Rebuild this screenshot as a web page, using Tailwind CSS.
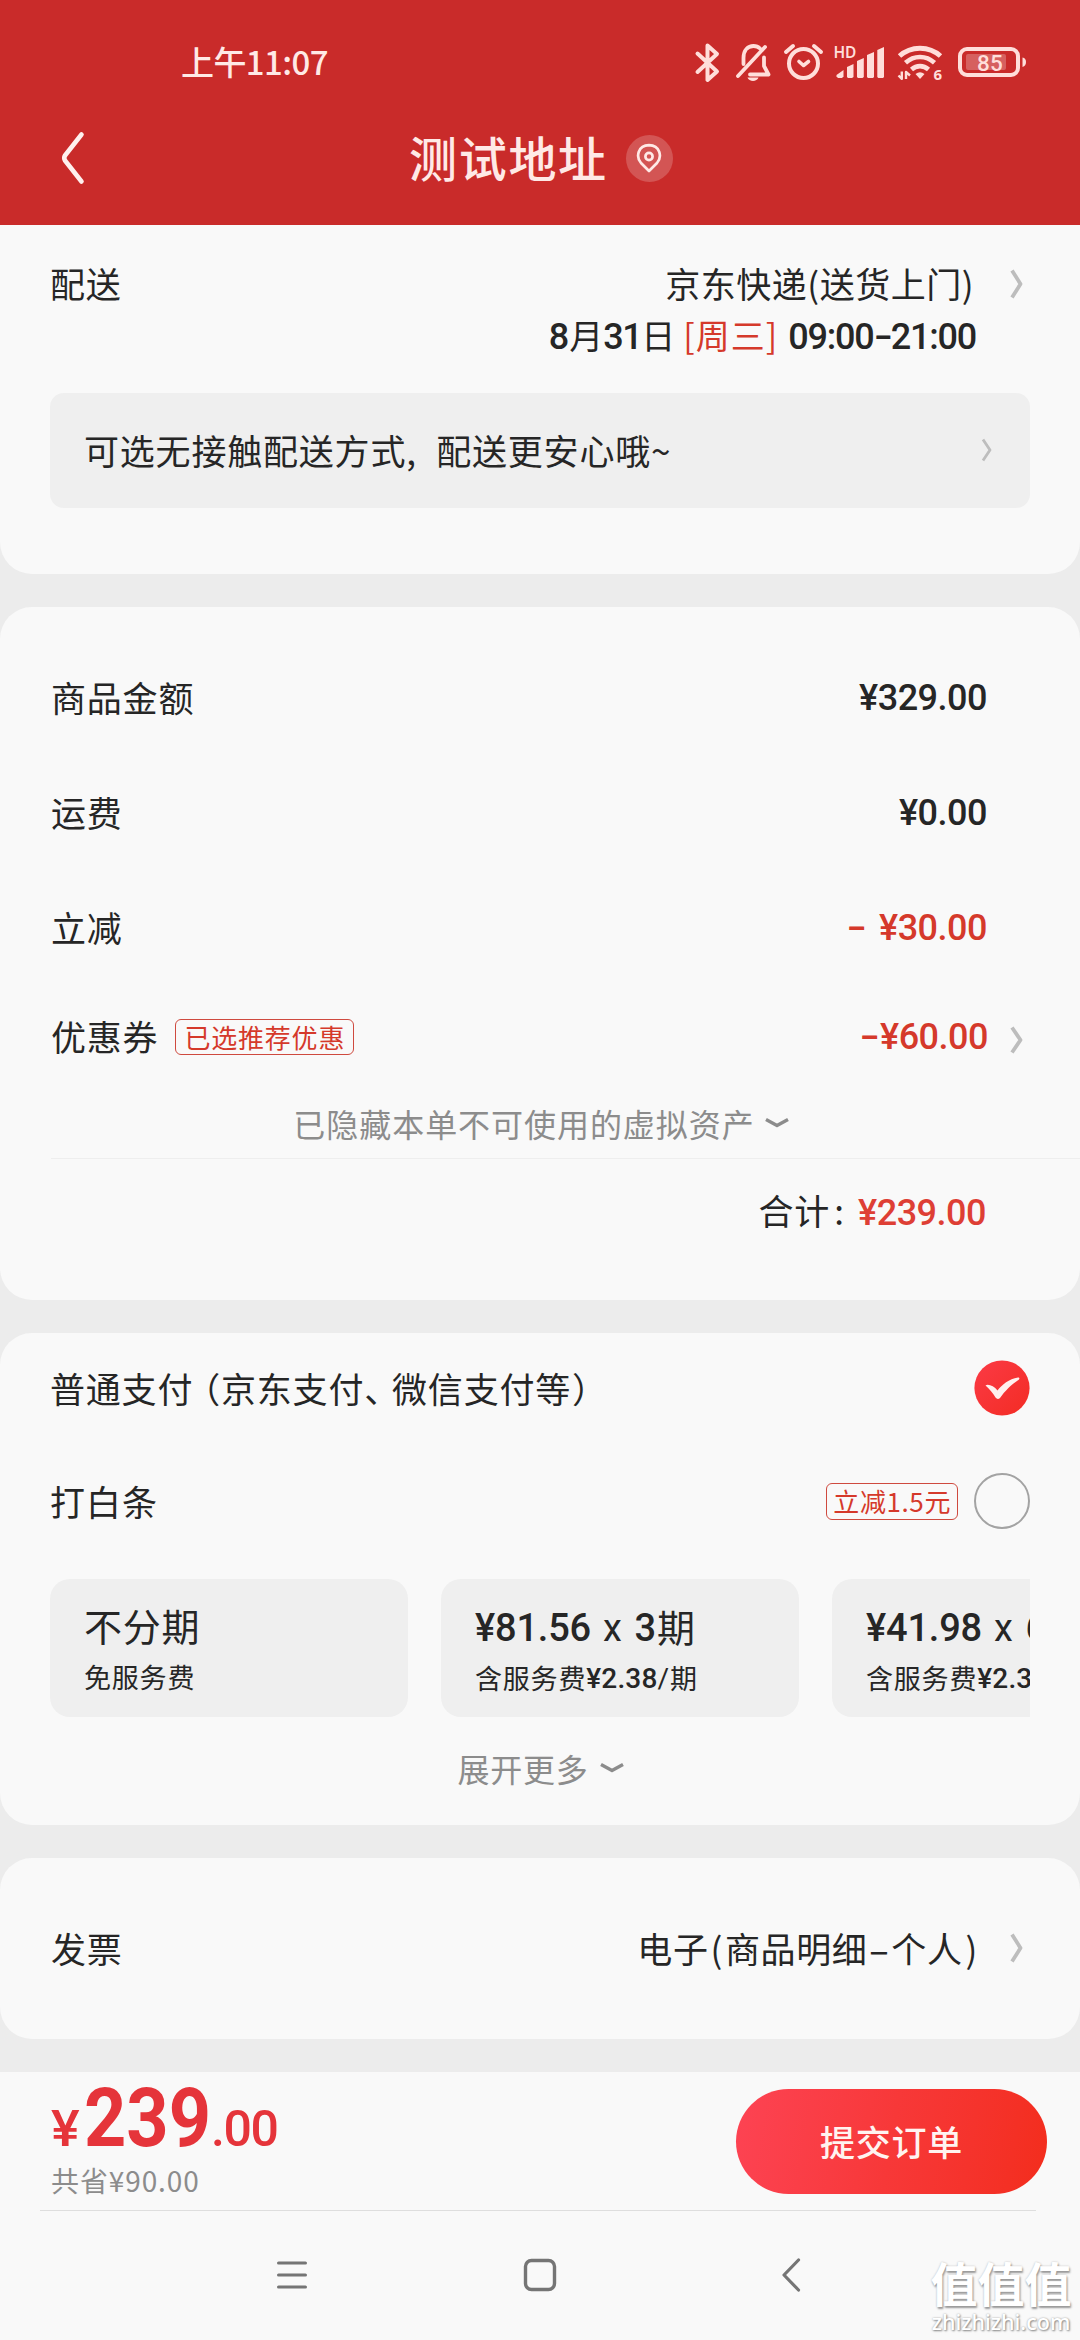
<!DOCTYPE html>
<html lang="zh-CN">
<head>
<meta charset="utf-8">
<title>确认订单</title>
<script src="https://cdn.jsdelivr.net/npm/@tailwindcss/browser@4"></script>
</head>
<body class="w-[1080px] h-[2340px] overflow-hidden bg-[#ececec] font-['Noto_Sans_CJK_SC',sans-serif] text-[35px] leading-[36px] tracking-[0.8px] text-[#262626]">
<div class="relative flex h-[2340px] w-[1080px] flex-col">

  <!-- header -->
  <header class="flex h-[225px] flex-none flex-col bg-[#c92b2a] text-[#ffe9e6]">
    <div class="flex h-[120px] items-start justify-between pl-[181px] pr-[53px] pt-[40px]">
      <div class="h-[44px] text-[33px] font-medium leading-[42px] tracking-[-0.6px]">上午11:07</div>
      <svg class="h-[44px] w-[336px]" viewBox="691 40 336 44" fill="none" stroke="#ffdeda" stroke-width="4" stroke-linecap="round" stroke-linejoin="round">
        <!-- bluetooth -->
        <path d="M697.500 53.500 L717 71.500 L707.500 80 V45.500 L717 54 L697.500 72" stroke-width="4"/>
        <!-- muted bell -->
        <path d="M765 47 L738 76" stroke-width="3.8"/>
        <path d="M743.500 64 V58 C743.500 50 748 46 753.500 46 C756 46 758.500 47 760 48.500 M764 57.500 V66 L768.500 74.500 H750" stroke-width="3.8"/>
        <path d="M747.500 77.500 H758.500 C757 82 749 82 747.500 77.500 Z" fill="#ffdeda" stroke="none"/>
        <!-- alarm -->
        <circle cx="803.500" cy="63.500" r="14.500"/>
        <path d="M799 61.500 L803.500 65.500 L808.500 61.500" stroke-width="3.6"/>
        <path d="M786 52 L793 46 M821 52 L814 46" />
        <!-- signal -->
        <text x="833.500" y="58" font-family="Noto Sans" font-size="15.500" font-weight="600" letter-spacing="-0.300" fill="#ffdeda" stroke="none">HD</text>
        <g fill="#ffdeda" stroke="none">
          <path d="M836.500 75 L843.500 70 V76.500 L842 78 H838 L836.500 76.500Z"/>
          <path d="M847 67 L853.500 64 V77 L852 78 H848 L847 77Z"/>
          <path d="M857 61 L863.800 58 V77 L862.500 78 H858 L857 77Z"/>
          <path d="M867 55 L874 52 V77 L873 78 H868 L867 77Z"/>
          <path d="M877.300 50 L884 47 V77 L883 78 H878.300 L877.300 77Z"/>
        </g>
        <!-- wifi -->
        <path d="M899.500 56 C911 45.500 929 45.500 940.500 56" stroke-width="5" stroke-linecap="butt"/>
        <path d="M905.500 62.800 C914 55 926 55 934.500 62.800" stroke-width="4.600" stroke-linecap="butt"/>
        <path d="M911.500 69.500 C916.500 65 923.500 65 928.500 69.500" stroke-width="4.600" stroke-linecap="butt"/>
        <path d="M915.500 74 Q920 70.500 924.500 74 L920 79Z" fill="#ffdeda" stroke="none"/>
        <path d="M898.500 75.500 L901.800 78.800 V71.500 M906 79 V72 L910 75.500" stroke-width="2.4" stroke-linecap="butt" />
        <text x="933.500" y="80" font-family="Noto Sans" font-size="15" font-weight="700" fill="#ffdeda" stroke="none">6</text>
        <!-- battery -->
        <rect x="960" y="49" width="58" height="26" rx="7"/>
        <rect x="966" y="54" width="40" height="16" rx="2" fill="#fff" fill-opacity="0.250" stroke="none"/>
        <path d="M1022.500 57.500 Q1026 58 1026 62 Q1026 66 1022.500 67Z" fill="#ffdeda" stroke="none"/>
        <text x="977" y="70.500" font-family="Roboto" font-size="22.500" font-weight="500" letter-spacing="0.300" fill="#ffdeda" stroke="none">85</text>
      </svg>
    </div>
    <div class="flex h-[76px] items-center pl-[60px]">
      <svg class="h-[56px] w-[26px]" viewBox="0 0 26 56" fill="none" stroke="#fff0ee" stroke-width="4.6" stroke-linecap="round" stroke-linejoin="round"><path d="M21.500 4.500 L5 25.500 Q3.500 28 5 30.500 L21.500 51.500"/></svg>
      <h1 class="mb-[5px] ml-[323px] text-[48px] font-medium leading-[50px] tracking-[1.7px]">测试地址</h1>
      <div class="ml-[18px] flex size-[47px] items-center justify-center rounded-full bg-white/20">
        <svg class="h-[32px] w-[26px]" viewBox="0 0 26 32" fill="none" stroke="#ffe9e6" stroke-width="2.7" stroke-linejoin="round"><path d="M13 29 L5 21 C-0.500 14.500 2 3.500 13 3.200 C24 3.500 26.500 14.500 21 21 Z"/><circle cx="13" cy="14.500" r="3.600"/></svg>
      </div>
    </div>
  </header>

  <!-- delivery -->
  <section class="flex h-[349px] flex-none flex-col rounded-b-[32px] bg-[#f9f9f9] px-[50px]">
    <div class="flex h-[168px] justify-between pt-[40px]">
      <span>配送</span>
      <div class="flex">
        <div class="flex flex-col items-end gap-[16px]">
          <span class="mr-[2px] tracking-[0.5px]">京东快递(送货上门)</span>
          <div class="flex items-baseline text-[34px] tracking-[0px]">
            <span class="font-['Roboto'] text-[36px] font-medium">8</span><span>月</span><span class="font-['Roboto'] text-[36px] font-medium tracking-[-1.4px]">31</span><span>日</span>
            <span class="ml-[8px] mr-[10px] tracking-[1px] text-[#d5392b]">[周三]</span>
            <span class="font-['Roboto'] text-[36px] font-medium tracking-[-1.2px]">09:00<span class="mx-[3px] inline-block scale-x-[1.5]">-</span>21:00</span>
          </div>
        </div>
        <svg class="ml-[32px] mr-[6px] mt-[3px] h-[32px] w-[16px]" viewBox="0 0 16 32" fill="none" stroke="#bdbdbd" stroke-width="3.8" stroke-linejoin="round"><path d="M4 2.500 L12.500 16 L4 29.500"/></svg>
      </div>
    </div>
    <div class="flex h-[115px] items-center justify-between rounded-[14px] bg-[#efefef] pb-[2px] pl-[34px] pr-[37px]">
      <span>可选无接触配送方式<span class="mr-[-2px] inline-block w-[32px]">,</span>配送更安心哦~</span>
      <svg class="h-[26px] w-[14px]" viewBox="0 0 14 26" fill="none" stroke="#bdbdbd" stroke-width="2.8" stroke-linejoin="round"><path d="M4 2.500 L11 13 L4 23.500"/></svg>
    </div>
  </section>

  <!-- amounts -->
  <section class="mt-[33px] flex h-[693px] flex-none flex-col rounded-[32px] bg-[#f9f9f9] pl-[51px]">
    <div class="mt-[32px] flex h-[115px] items-center justify-between pr-[93px]"><span>商品金额</span><span class="pt-[2px] font-['Roboto'] text-[36px] font-medium tracking-[-0.5px]">¥329.00</span></div>
    <div class="flex h-[115px] items-center justify-between pr-[93px]"><span>运费</span><span class="pt-[2px] font-['Roboto'] text-[36px] font-medium tracking-[-0.5px]">¥0.00</span></div>
    <div class="flex h-[115px] items-center justify-between pr-[93px]"><span>立减</span><span class="pt-[2px] font-['Roboto'] text-[36px] font-medium tracking-[-0.5px] text-[#d5392b]"><span class="mr-[13px] inline-block origin-right scale-x-[1.6]">-</span>¥30.00</span></div>
    <div class="flex h-[104px] items-center justify-between pr-[56px]">
      <div class="flex items-center"><span>优惠券</span><span class="ml-[17px] mt-[1px] flex h-[36px] items-center rounded-[6px] border-[1.5px] border-[#cf4a3f] px-[8px] text-[26px] leading-none tracking-[0.8px] text-[#d5392b]">已选推荐优惠</span></div>
      <div class="flex items-center"><span class="pt-[1px] font-['Roboto'] text-[36px] font-medium tracking-[-0.5px] text-[#d5392b]"><span class="mr-[1px] inline-block origin-right scale-x-[1.6]">-</span>¥60.00</span>
        <svg class="ml-[20px] mt-[8px] h-[32px] w-[16px]" viewBox="0 0 16 32" fill="none" stroke="#bdbdbd" stroke-width="3.8" stroke-linejoin="round"><path d="M4 3.500 L12.500 16 L4 28.500"/></svg></div>
    </div>
    <div class="flex h-[70px] items-center justify-center pr-[48px] text-[32px] tracking-[0.95px] text-[#8c8c8c]">
      <span>已隐藏本单不可使用的虚拟资产</span>
      <svg class="ml-[9px] h-[14px] w-[26px]" viewBox="0 0 26 14" fill="none" stroke="#8c8c8c" stroke-width="3.4" stroke-linejoin="round"><path d="M2 3.500 L13 9.500 L24 3.500"/></svg>
    </div>
    <div class="flex h-[107px] items-center justify-end border-t border-[#eeeeee] pb-[4px] pr-[94px]"><span>合计</span><span class="mr-[9px] w-[19px] text-center">:</span><span class="pt-[6px] font-['Roboto'] text-[36px] font-medium tracking-[-0.5px] text-[#de3f35]">¥239.00</span></div>
  </section>

  <!-- payment -->
  <section class="mt-[33px] flex h-[492px] flex-none flex-col rounded-[32px] bg-[#f9f9f9] px-[50px]">
    <div class="mt-[27px] flex h-[56px] items-center justify-between">
      <span>普通支付<span class="ml-[-8px]">（</span>京东支付<span class="mr-[-8px]">、</span>微信支付等<span class="ml-[1px]">）</span></span>
      <svg class="size-[56px]" viewBox="0 0 56 56"><defs><linearGradient id="ck" x1="0" y1="0" x2="1" y2="1"><stop offset="0" stop-color="#fb3a45"/><stop offset="1" stop-color="#f32c24"/></linearGradient></defs><circle cx="28" cy="28" r="27.600" fill="url(#ck)"/><path d="M11.500 25.500 C14 23.500 20 26 23.500 30.500 C28 24.500 35 19 44 17.500 C46 17.500 45.500 19 44.500 20 C38 24 31 31 26 38 Q23.500 40 21.500 37.500 C19 33 15.500 29 11.500 25.500Z" fill="#fff0ee"/></svg>
    </div>
    <div class="mt-[57px] flex h-[56px] items-center justify-between">
      <span class="tracking-[1px]">打白条</span>
      <div class="flex items-center gap-[16px]"><span class="flex h-[37px] items-center rounded-[6px] border-[1.5px] border-[#cf4a3f] px-[6px] text-[26px] leading-none tracking-[0.6px] text-[#d5392b]">立减1.5元</span><span class="size-[56px] rounded-full border-2 border-[#a3a3a3]"></span></div>
    </div>
    <div class="mt-[50px] flex h-[138px] gap-[33px] overflow-hidden">
      <div class="flex w-[358px] flex-none flex-col gap-[17px] rounded-[20px] bg-[#efefef] pl-[34px] pt-[28px]">
        <div class="h-[38px] text-[38px] leading-[36px]">不分期</div><div class="text-[27px] leading-[30px] tracking-[0.8px]">免服务费</div>
      </div>
      <div class="flex w-[358px] flex-none flex-col gap-[17px] rounded-[20px] bg-[#efefef] pl-[34px] pt-[28px]">
        <div class="flex h-[38px] items-center text-[38px] leading-[38px]"><span class="pt-[3px] font-['Roboto'] font-medium tracking-[-0.2px]">¥81.56</span><span class="mx-[12px] pt-[3px] font-['Roboto']">x</span><span class="pt-[3px] font-['Roboto'] font-medium">3</span><span class="pb-[1px]">期</span></div>
        <div class="flex items-center text-[27px] leading-[30px] tracking-[0.8px]"><span>含服务费</span><span class="pt-[2px] font-['Roboto'] text-[28px] font-medium tracking-[0.2px]">¥2.38</span><span class="pt-[2px] font-['Roboto'] text-[28px]">/</span><span>期</span></div>
      </div>
      <div class="flex w-[358px] flex-none flex-col gap-[17px] rounded-[20px] bg-[#efefef] pl-[34px] pt-[28px]">
        <div class="flex h-[38px] items-center text-[38px] leading-[38px]"><span class="pt-[3px] font-['Roboto'] font-medium tracking-[-0.2px]">¥41.98</span><span class="mx-[12px] pt-[3px] font-['Roboto']">x</span><span class="pt-[3px] font-['Roboto'] font-medium">6</span><span class="pb-[1px]">期</span></div>
        <div class="flex items-center text-[27px] leading-[30px] tracking-[0.8px]"><span>含服务费</span><span class="pt-[2px] font-['Roboto'] text-[28px] font-medium tracking-[0.2px]">¥2.38</span><span class="pt-[2px] font-['Roboto'] text-[28px]">/</span><span>期</span></div>
      </div>
    </div>
    <div class="mt-[32px] flex h-[38px] items-center justify-center text-[32px] tracking-[0.8px] text-[#8c8c8c]"><span class="ml-[2px]">展开更多</span>
      <svg class="ml-[10px] h-[14px] w-[26px]" viewBox="0 0 26 14" fill="none" stroke="#8c8c8c" stroke-width="3.4" stroke-linejoin="round"><path d="M2 3.500 L13 9.500 L24 3.500"/></svg></div>
  </section>

  <!-- invoice -->
  <section class="mt-[33px] flex h-[181px] flex-none items-center justify-between rounded-[32px] bg-[#f9f9f9] pb-[2px] pl-[51px] pr-[56px]">
    <span>发票</span>
    <div class="flex items-center"><span class="tracking-[0.6px]">电子<span class="ml-[2px] mr-[2px]">(</span>商品明细<span class="inline-block w-[24px] scale-x-[1.8] text-center tracking-normal">-</span>个人<span class="ml-[3px]">)</span></span>
      <svg class="ml-[30px] h-[32px] w-[16px]" viewBox="0 0 16 32" fill="none" stroke="#bdbdbd" stroke-width="3.8" stroke-linejoin="round"><path d="M4 2.500 L12.500 16 L4 29.500"/></svg></div>
  </section>

  <!-- submit bar -->
  <footer class="mt-[33px] flex flex-1 flex-col bg-[#f9f9f9]">
    <div class="flex h-[138px] items-start justify-between pl-[51px] pr-[33px]">
      <div>
        <div class="flex h-[92px] items-baseline font-['Roboto'] leading-[92px] text-[#e5343a]"><span class="inline-block w-[28px] origin-left scale-x-[1.08] text-[50px] font-medium">¥</span><span class="ml-[5px] inline-block w-[127px] origin-left scale-x-[0.9] text-[82px] font-bold tracking-[0px]">239</span><span class="text-[50px] font-medium tracking-[-1.4px]">.00</span></div>
        <div class="mt-[1px] text-[28px] leading-[30px] tracking-[0.9px] text-[#8c8c8c]">共省¥90.00</div>
      </div>
      <button class="mt-[17px] h-[105px] w-[311px] rounded-full bg-linear-100 from-[#fd4353] via-[#f73838] to-[#f32d1c] pb-[2px] text-[35px] font-medium tracking-[0.8px] text-[#fff3f0]">提交订单</button>
    </div>
    <div class="ml-[40px] mr-[44px] h-px bg-[#dedede]"></div>
    <nav class="flex h-[128px] items-center pl-[276px]">
      <svg class="h-[36px] w-[32px]" viewBox="0 0 32 36" stroke="#757575" stroke-width="3" stroke-linecap="round"><path d="M2.500 6 H29.500 M2.500 18 H29.500 M2.500 30 H29.500"/></svg>
      <svg class="ml-[214px] size-[36px]" viewBox="0 0 36 36" fill="none" stroke="#757575" stroke-width="3.4"><rect x="3.500" y="3.500" width="29" height="29" rx="6"/></svg>
      <svg class="ml-[222px] h-[36px] w-[24px]" viewBox="0 0 24 36" fill="none" stroke="#757575" stroke-width="3.2" stroke-linecap="round" stroke-linejoin="round"><path d="M18.500 3 L4 18 L18.500 33"/></svg>
    </nav>
  </footer>

  <!-- site watermark -->
  <div class="absolute bottom-[4px] right-[8px] flex w-[142px] flex-col items-center text-white">
    <div class="text-[47px] font-bold leading-[48px] tracking-[0px] [text-shadow:1px_2px_2px_#999,0_0_2px_#bbb]">值值值</div>
    <div class="mt-[2px] font-['Noto_Sans'] text-[21.5px] font-medium leading-[28px] tracking-[0px] [text-shadow:1px_1px_2px_#888,0_0_2px_#aaa]">zhizhizhi.com</div>
  </div>
</div>
</body>
</html>
